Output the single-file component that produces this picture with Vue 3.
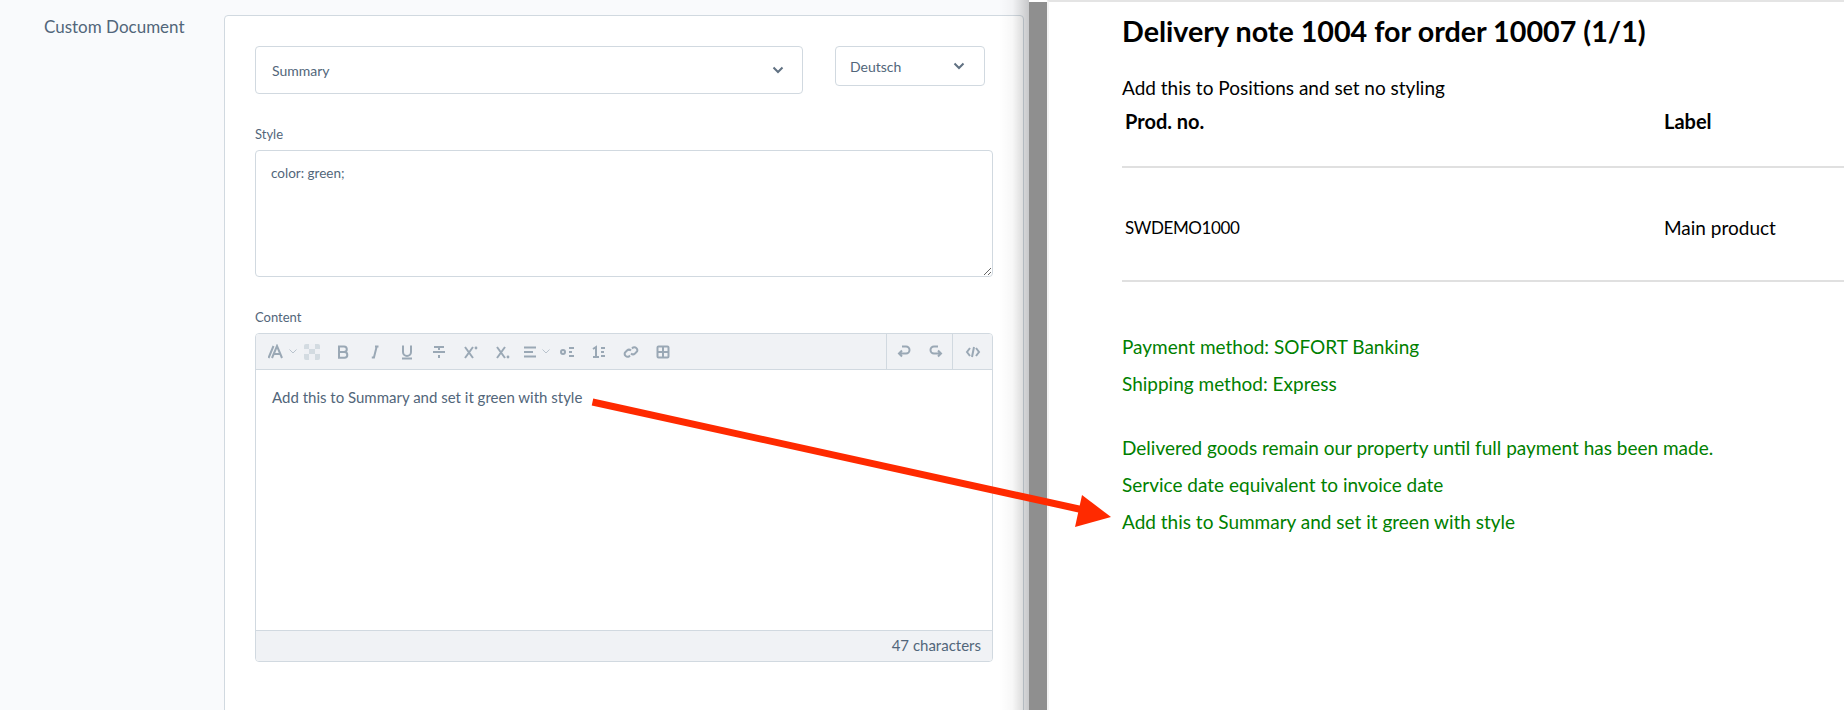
<template>
  <div class="page">
    <section class="admin">
      <div class="row">
        <div class="row-label">Custom Document</div>
        <div class="card">
          <div class="selects">
            <div class="select main">
              <span>Summary</span>
              <svg class="chev" viewBox="0 0 12 8"><path d="M1.5 1.5 6 6l4.500-4.500" /></svg>
            </div>
            <div class="select lang">
              <span>Deutsch</span>
              <svg class="chev" viewBox="0 0 12 8"><path d="M1.5 1.5 6 6l4.500-4.500" /></svg>
            </div>
          </div>

          <label class="style-label">Style</label>
          <textarea class="style-input" :value="styleText"></textarea>

          <label class="content-label">Content</label>
          <div class="editor">
            <div class="toolbar">
              <div class="font-group">
                <svg class="ico" viewBox="0 0 16 16"><path d="M.500 14 5.500 2M4 14 9 2l5 12M6 10h6" /></svg>
                <svg class="caret" viewBox="0 0 8 5"><path d="M.500.500 4 4 7.500.500" /></svg>
                <div class="checker"><i></i><i></i><i></i><i></i><i></i></div>
              </div>
              <div class="slots">
                <span v-for="icon in leftIcons" :key="icon.name" class="slot" :class="{ wide: icon.caret }">
                  <svg class="ico" viewBox="0 0 16 16">
                    <path :d="icon.d" />
                    <circle v-if="icon.dot" :cx="icon.dot[0]" :cy="icon.dot[1]" r="1.400" class="dot" />
                  </svg>
                  <svg v-if="icon.caret" class="caret" viewBox="0 0 8 5"><path d="M.500.500 4 4 7.500.500" /></svg>
                </span>
              </div>
              <div class="history">
                <span class="slot"><svg class="ico" viewBox="0 0 16 16"><path d="M6 2.500h4a3.500 3.500 0 0 1 0 7H3M6 6.500l-3 3 3 3" /></svg></span>
                <span class="slot"><svg class="ico" viewBox="0 0 16 16"><path d="M10 2.500H6a3.500 3.500 0 0 0 0 7h7M10 6.500l3 3-3 3" /></svg></span>
              </div>
              <div class="code">
                <svg class="ico" viewBox="0 0 16 16"><path d="M5 4 2 8l3 4M11 4l3 4-3 4M9 3 7 13" /></svg>
              </div>
            </div>
            <div class="editor-body">Add this to Summary and set it green with style</div>
            <div class="editor-foot">47 characters</div>
          </div>
        </div>
      </div>
      <div class="modal-shadow"></div>
    </section>

    <div class="backdrop"></div>

    <section class="doc">
      <h1>Delivery note 1004 for order 10007 (1/1)</h1>
      <p class="positions">Add this to Positions and set no styling</p>
      <div class="doc-row head">
        <span>Prod. no.</span>
        <span>Label</span>
      </div>
      <div class="doc-row item">
        <span class="sku">SWDEMO1000</span>
        <span>Main product</span>
      </div>
      <div class="green first">
        <p>Payment method: SOFORT Banking</p>
        <p>Shipping method: Express</p>
      </div>
      <div class="green second">
        <p>Delivered goods remain our property until full payment has been made.</p>
        <p>Service date equivalent to invoice date</p>
        <p>Add this to Summary and set it green with style</p>
      </div>
    </section>

    <svg class="arrow" viewBox="0 0 1844 710">
      <line x1="592.500" y1="402" x2="1088" y2="511" />
      <polygon points="1082,495 1111,517 1075,527" />
    </svg>
  </div>
</template>

<script setup>
const styleText = 'color: green;'

const leftIcons = [
  { name: 'bold', d: 'M4 2.500h5a2.800 2.800 0 0 1 0 5.600H4zM4 8.100h5.500a2.800 2.800 0 0 1 0 5.600H4z' },
  { name: 'italic', d: 'M9.800 2 6.800 14M8 2.500h3.500M4.800 13.500h3' },
  { name: 'underline', d: 'M4 1.500V8a4 4 0 0 0 8 0V1.500M3 14.500h10' },
  { name: 'strike', d: 'M2 8h12M3 3h10M8 3v3M8 11v3' },
  { name: 'sup', d: 'M2 3l8 11M10 3l-8 11', dot: [13, 4] },
  { name: 'sub', d: 'M2 3l8 11M10 3l-8 11', dot: [13, 13] },
  { name: 'align', d: 'M2 3.500h12M2 8h9M2 12.500h12', caret: true },
  { name: 'ul', d: 'M10 4h5M10 8h3M10 12h5M4 6a2 2 0 1 1 0 4 2 2 0 0 1 0-4z' },
  { name: 'ol', d: 'M2 5l3-2v10M2 13h6M10 4h4M10 8h3M10 12h4' },
  { name: 'link', d: 'M9 4.500l1-1a3 3 0 0 1 4 4l-2 2a3 3 0 0 1-4 0M7 11.500l-1 1a3 3 0 0 1-4-4l2-2a3 3 0 0 1 4 0' },
  { name: 'table', d: 'M3.500 2.500h9a1 1 0 0 1 1 1v9a1 1 0 0 1-1 1h-9a1 1 0 0 1-1-1v-9a1 1 0 0 1 1-1zM8 2.500v11M2.500 8h11' }
]
</script>

<style>
html, body {
  margin: 0;
  background: #fff;
}
</style>

<style scoped>
.page {
  position: relative;
  display: flex;
  width: 1844px;
  height: 710px;
  overflow: hidden;
  font-family: Lato, "Noto Sans", sans-serif;
  color: #52667a;
}

.admin {
  position: relative;
  width: 1029px;
  flex: none;
  background: #f9fafc;
}

.row {
  display: flex;
  padding-top: 15px;
  height: 695px;
}

.row-label {
  width: 180px;
  padding-left: 44px;
  font-size: 17px;
  line-height: 24px;
  flex: none;
}

.card {
  width: 800px;
  height: 720px;
  flex: none;
  box-sizing: border-box;
  padding: 30px;
  background: #fff;
  border: 1px solid #d1d9e0;
  border-radius: 4px;
}

.selects {
  display: flex;
  align-items: flex-start;
  gap: 32px;
}

.select {
  display: flex;
  align-items: center;
  justify-content: space-between;
  box-sizing: border-box;
  border: 1px solid #d1d9e0;
  border-radius: 4px;
  font-size: 14px;
  background: #fff;
}

.select.main {
  width: 548px;
  height: 48px;
  padding: 0 18px 0 16px;
}

.select.lang {
  width: 150px;
  height: 40px;
  padding: 0 19px 0 14px;
}

.chev {
  width: 12px;
  height: 8px;
  fill: none;
  stroke: #607182;
  stroke-width: 2;
}

.style-label,
.content-label {
  display: block;
  font-size: 13px;
  line-height: 16px;
}

.style-label {
  margin-top: 32px;
  margin-bottom: 8px;
}

.style-input {
  display: block;
  box-sizing: border-box;
  width: 738px;
  height: 127px;
  padding: 11px 15px;
  border: 1px solid #d1d9e0;
  border-radius: 4px;
  font: 13.5px/22px Lato, "Noto Sans", sans-serif;
  color: #52667a;
  outline: none;
}

.content-label {
  margin-top: 32px;
  margin-bottom: 8px;
}

.editor {
  box-sizing: border-box;
  width: 738px;
  height: 329px;
  display: flex;
  flex-direction: column;
  border: 1px solid #d1d9e0;
  border-radius: 4px;
}

.toolbar {
  display: flex;
  align-items: stretch;
  height: 35px;
  flex: none;
  background: #f0f2f5;
  border-bottom: 1px solid #d1d9e0;
  border-radius: 3px 3px 0 0;
}

.ico {
  width: 16px;
  height: 16px;
  flex: none;
  fill: none;
  stroke: #9aa8b5;
  stroke-width: 2;
}

.dot {
  fill: #9aa8b5;
  stroke: none;
}

.caret {
  width: 8px;
  height: 5px;
  margin-left: 5px;
  fill: none;
  stroke: #b9c3cd;
  stroke-width: 1;
}

.font-group {
  display: flex;
  align-items: center;
  width: 71px;
  padding-left: 12px;
  box-sizing: border-box;
  flex: none;
}

.checker {
  display: grid;
  grid-template-columns: repeat(3, 1fr);
  grid-template-rows: repeat(3, 1fr);
  width: 16px;
  height: 16px;
  margin-left: 7px;
  background: #eef0f4;
  border-radius: 2px;
  overflow: hidden;
}

.checker i {
  background: #d3dbe1;
}

.checker i:nth-child(1) { grid-area: 1 / 1; }
.checker i:nth-child(2) { grid-area: 1 / 3; }
.checker i:nth-child(3) { grid-area: 2 / 2; }
.checker i:nth-child(4) { grid-area: 3 / 1; }
.checker i:nth-child(5) { grid-area: 3 / 3; }

.slots {
  display: flex;
  flex: 1;
}

.slot {
  display: flex;
  align-items: center;
  justify-content: center;
  width: 32px;
  flex: none;
}

.slot.wide {
  justify-content: flex-start;
  padding-left: 3px;
  box-sizing: border-box;
}

.slot.wide .caret {
  margin-left: 4px;
}

.history {
  display: flex;
  align-items: center;
  justify-content: center;
  box-sizing: border-box;
  width: 66px;
  border-left: 1px solid #d1d9e0;
  flex: none;
}

.code {
  display: flex;
  align-items: center;
  justify-content: center;
  box-sizing: border-box;
  width: 40px;
  border-left: 1px solid #d1d9e0;
  flex: none;
}

.editor-body {
  flex: 1;
  padding: 16px 16px;
  font-size: 15px;
  line-height: 22px;
}

.editor-foot {
  flex: none;
  height: 31px;
  box-sizing: border-box;
  padding-right: 11px;
  background: #f0f2f5;
  border-top: 1px solid #d1d9e0;
  border-radius: 0 0 3px 3px;
  font-size: 15px;
  line-height: 29px;
  text-align: right;
}

.modal-shadow {
  position: absolute;
  top: 0;
  right: 0;
  bottom: 0;
  width: 30px;
  background: linear-gradient(to right, rgba(0, 0, 0, 0), rgba(0, 0, 0, .03) 45%, rgba(0, 0, 0, .2));
  pointer-events: none;
}

.backdrop {
  flex: none;
  width: 18px;
  margin-top: 2px;
  background: #8f8f8f;
}

.doc {
  flex: 1;
  box-sizing: border-box;
  padding: 0 0 0 73px;
  background: #fff;
  border-top: 2px solid #e4e4e4;
  border-left: 2px solid #f3f3f3;
  color: #000;
  font-size: 19px;
}

.doc h1 {
  margin: 0;
  padding-top: 13px;
  font-size: 28.700px;
  line-height: 32px;
  font-weight: 700;
}

.positions {
  margin: 29px 0 0;
  line-height: 24px;
}

.doc-row {
  display: grid;
  grid-template-columns: 539px 1fr;
  padding-left: 3px;
  border-bottom: 2px solid #e0e0e0;
}

.doc-row.head {
  height: 68px;
  padding-top: 9px;
  box-sizing: border-box;
  font-size: 20px;
  font-weight: 700;
  line-height: 24px;
}

.doc-row.item {
  height: 114px;
  padding-top: 6px;
  box-sizing: border-box;
  align-items: center;
}

.sku {
  font-size: 17px;
  letter-spacing: -.4px;
}

.green {
  color: #008000;
}

.green p {
  margin: 0 0 13px;
  line-height: 24px;
}

.green.first {
  margin-top: 53px;
}

.green.second {
  margin-top: 40px;
}

.arrow {
  position: absolute;
  inset: 0;
  width: 1844px;
  height: 710px;
  pointer-events: none;
}

.arrow line {
  stroke: #ff2a00;
  stroke-width: 7;
}

.arrow polygon {
  fill: #ff2a00;
}
</style>
